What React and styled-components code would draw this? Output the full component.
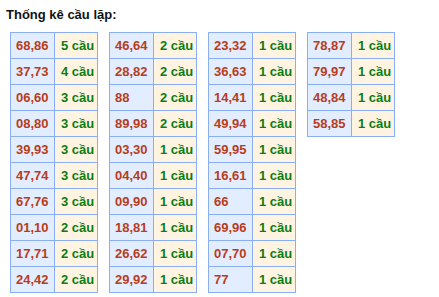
import React from "react";
import styled, { createGlobalStyle } from "styled-components";

const Global = createGlobalStyle`
  html, body { margin: 0; padding: 0; background: #fff; }
  body { font-family: "Liberation Sans", Arial, sans-serif; }
`;

const Page = styled.div`
  padding: 7px 0 0 6px;
`;

const Title = styled.div`
  font-size: 13px;
  font-weight: bold;
  color: #111;
  line-height: 16px;
  height: 16px;
`;

const Tables = styled.div`
  display: flex;
  align-items: flex-start;
  gap: 11px;
  margin: 9px 0 0 4px;
`;

const Grid = styled.div`
  display: grid;
  grid-template-columns: 43px 42px;
  grid-auto-rows: 25px;
  gap: 1px;
  padding: 1px;
  background: #8aaef3;
`;

const Cell = styled.div`
  display: flex;
  align-items: center;
  padding-left: ${(p) => (p.$count ? 6 : 5)}px;
  font-size: 13px;
  font-weight: bold;
  line-height: 15px;
  white-space: nowrap;
  background: ${(p) => (p.$count ? "#fff4e2" : "#e2eeff")};
  color: ${(p) => (p.$count ? "#0b7d12" : "#b83c1c")};
`;

const data = [
  [
    ["68,86", 5], ["37,73", 4], ["06,60", 3], ["08,80", 3], ["39,93", 3],
    ["47,74", 3], ["67,76", 3], ["01,10", 2], ["17,71", 2], ["24,42", 2],
  ],
  [
    ["46,64", 2], ["28,82", 2], ["88", 2], ["89,98", 2], ["03,30", 1],
    ["04,40", 1], ["09,90", 1], ["18,81", 1], ["26,62", 1], ["29,92", 1],
  ],
  [
    ["23,32", 1], ["36,63", 1], ["14,41", 1], ["49,94", 1], ["59,95", 1],
    ["16,61", 1], ["66", 1], ["69,96", 1], ["07,70", 1], ["77", 1],
  ],
  [["78,87", 1], ["79,97", 1], ["48,84", 1], ["58,85", 1]],
];

export default function App() {
  return (
    <>
      <Global />
      <Page>
        <Title>Thống kê cầu lặp:</Title>
        <Tables>
          {data.map((col, i) => (
            <Grid key={i}>
              {col.map(([pair, n]) => (
                <React.Fragment key={pair}>
                  <Cell>{pair}</Cell>
                  <Cell $count>{n} cầu</Cell>
                </React.Fragment>
              ))}
            </Grid>
          ))}
        </Tables>
      </Page>
    </>
  );
}
